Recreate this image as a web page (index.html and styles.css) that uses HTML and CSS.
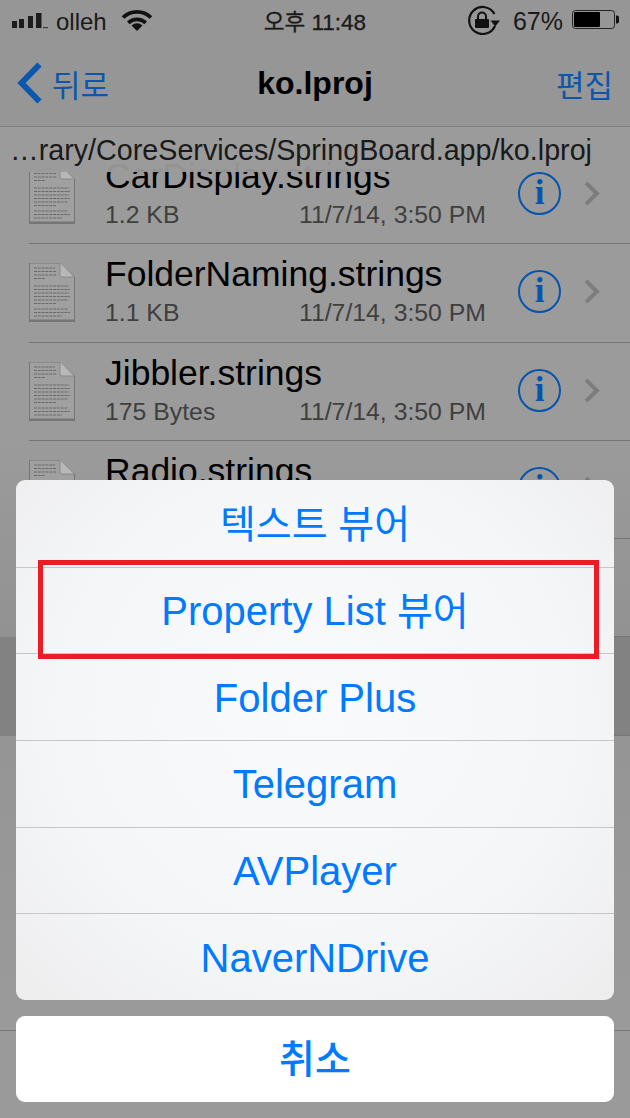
FILE: index.html
```html
<!DOCTYPE html>
<html lang="ko">
<head>
  <meta charset="UTF-8" />
  <meta name="viewport" content="width=device-width, initial-scale=1.0"/>
  <title>ko.lproj</title>
  <link rel="stylesheet" href="styles.css">
</head>
<body>
  <!-- Icono de archivo reutilizable -->
  <svg class="defs" width="0" height="0">
    <symbol id="doc" viewBox="0 0 46 60">
      <path d="M0 1H31L46 15V60H0Z" fill="#757575"/>
      <path d="M1 1.500H31L45 15V57.500H1Z" fill="#a0a0a0"/>
      <path d="M31 1L45 15H33Q31 15 31 13Z" fill="#b8b8b8"/>
      <path d="M31 1V13Q31 15 33 15H45" fill="none" stroke="#808080" stroke-width=".8"/>
      <g stroke="#6a6a6a" stroke-width="1" stroke-dasharray="3 .8">
        <path d="M5 6H26M5 9.500H28M5 13H28M5 16.500H16"/>
        <path d="M5 24H40M5 27.500H41M5 31H40M5 34.500H41M5 38H39M5 41.500H27"/>
        <path d="M5 47H39M5 50.500H41M5 54H33"/>
      </g>
    </symbol>
  </svg>

  <div class="screen">
    <!-- Lista de archivos -->
    <div class="list">
      <div class="row">
        <svg class="doc"><use href="#doc"/></svg>
        <div class="row-text">
          <div class="row-title">CarDisplay.strings</div>
          <div class="row-meta"><span>1.2 KB</span><span>11/7/14, 3:50 PM</span></div>
        </div>
        <span class="info">i</span>
        <span class="chevron"></span>
      </div>
      <div class="row">
        <svg class="doc"><use href="#doc"/></svg>
        <div class="row-text">
          <div class="row-title">FolderNaming.strings</div>
          <div class="row-meta"><span>1.1 KB</span><span>11/7/14, 3:50 PM</span></div>
        </div>
        <span class="info">i</span>
        <span class="chevron"></span>
      </div>
      <div class="row">
        <svg class="doc"><use href="#doc"/></svg>
        <div class="row-text">
          <div class="row-title">Jibbler.strings</div>
          <div class="row-meta"><span>175 Bytes</span><span>11/7/14, 3:50 PM</span></div>
        </div>
        <span class="info">i</span>
        <span class="chevron"></span>
      </div>
      <div class="row">
        <svg class="doc"><use href="#doc"/></svg>
        <div class="row-text">
          <div class="row-title">Radio.strings</div>
        </div>
        <span class="info">i</span>
        <span class="chevron"></span>
      </div>
      <div class="row"></div>
      <div class="row row-selected"></div>
    </div>
    <div class="toolbar"></div>

    <!-- Cabecera -->
    <header class="top">
      <div class="status">
        <div class="status-left">
          <svg class="signal" width="37" height="16" viewBox="0 0 37 16">
            <rect x="0" y="8" width="5" height="7" fill="#1c1c1c"/>
            <rect x="7" y="6" width="5" height="9" fill="#1c1c1c"/>
            <rect x="16" y="3" width="5" height="12" fill="#1c1c1c"/>
            <rect x="24" y="0" width="5.500" height="15" fill="#1c1c1c"/>
            <rect x="31" y="14" width="5" height="1.200" fill="#3a3a3a"/>
          </svg>
          <span class="carrier">olleh</span>
          <svg class="wifi" width="32" height="22" viewBox="0 0 32 22">
            <g fill="none" stroke="#111" stroke-width="3.800">
              <path d="M2 8.500A20 20 0 0 1 30 8.500"/>
              <path d="M7.300 13.800A12.500 12.500 0 0 1 24.700 13.800"/>
            </g>
            <path d="M16 22L10.500 16.500A7.800 7.800 0 0 1 21.500 16.500Z" fill="#111"/>
          </svg>
        </div>
        <div class="clock">오후 11:48</div>
        <div class="status-right">
          <svg class="rotation" width="36" height="30" viewBox="0 0 36 30">
            <path d="M30 21A13.500 13.500 0 1 1 29.500 9" fill="none" stroke="#111" stroke-width="2.200"/>
            <path d="M25.500 15.500H35L30.200 21.500Z" fill="#111"/>
            <rect x="10" y="14" width="14" height="9" rx="1" fill="#111"/>
            <path d="M13 14V11.500A4 4 0 0 1 21 11.500V14" fill="none" stroke="#111" stroke-width="2"/>
          </svg>
          <span class="percent">67%</span>
          <svg class="battery" width="47" height="20" viewBox="0 0 47 20">
            <rect x=".5" y=".5" width="42" height="18" rx="3" fill="none" stroke="#222"/>
            <rect x="2" y="2" width="26" height="15" rx="1" fill="#000"/>
            <path d="M44 5.500H45A2 2 0 0 1 47 7.500V11.500A2 2 0 0 1 45 13.500H44Z" fill="#111"/>
          </svg>
        </div>
      </div>
      <nav class="nav">
        <div class="nav-back">
          <svg class="back-arrow" width="26" height="42" viewBox="0 0 26 42">
            <path d="M22.500 2.500L4.500 21L22.500 39.500" fill="none" stroke="#0a57ad" stroke-width="6"/>
          </svg>
          <span>뒤로</span>
        </div>
        <h1 class="nav-title">ko.lproj</h1>
        <div class="nav-edit">편집</div>
      </nav>
      <div class="path">…rary/CoreServices/SpringBoard.app/ko.lproj</div>
    </header>

    <!-- Hoja de acciones -->
    <div class="action-sheet">
      <div class="sheet-group">
        <div class="sheet-item sheet-item-ko"><span class="ko">텍스트 뷰어</span></div>
        <div class="sheet-item sheet-item-ko"><span>Property List <span class="ko">뷰어</span></span></div>
        <div class="sheet-item">Folder Plus</div>
        <div class="sheet-item">Telegram</div>
        <div class="sheet-item">AVPlayer</div>
        <div class="sheet-item">NaverNDrive</div>
      </div>
      <div class="sheet-cancel">취소</div>
    </div>

    <div class="red-box"></div>
  </div>
</body>
</html>
```

FILE: styles.css
```css
* {
  box-sizing: border-box;
}

body {
  margin: 0;
  padding: 0;
  background-color: #9a9a9a;
  font-family: "Liberation Sans", "Noto Sans CJK KR", sans-serif;
}

.defs {
  position: absolute;
}

.screen {
  position: relative;
  width: 630px;
  height: 1118px;
  overflow: hidden;
  background: linear-gradient(#9b9b9b 0, #9b9b9b 440px, #929292 637px, #959595 740px, #9a9a9a 1000px);
}

/* Lista */
.list {
  padding-top: 146px;
}

.row {
  position: relative;
  display: flex;
  align-items: flex-start;
  height: 98.300px;
  padding: 16px 30px 0 29px;
}

.row::after {
  content: "";
  position: absolute;
  left: 29px;
  right: 0;
  bottom: 0;
  height: 1px;
  background-color: #767676;
}

.row-selected {
  background-color: #828282;
}

.doc {
  flex: none;
  width: 46px;
  height: 60px;
  margin-top: 2px;
  filter: blur(0.5px);
}

.row-text {
  flex: none;
  width: 381px;
  margin: -5px 0 0 30px;
}

.row-title {
  font-size: 35.500px;
  line-height: 38px;
  color: #000;
  white-space: nowrap;
}

.row-meta {
  display: flex;
  justify-content: space-between;
  margin-top: 6px;
  font-size: 24.800px;
  line-height: 28px;
  color: #3f3f3f;
}

.info {
  flex: none;
  width: 43px;
  height: 43px;
  margin: 10px 0 0 32px;
  border: 2px solid #0654ad;
  border-radius: 50%;
  font-family: "Liberation Serif", serif;
  font-size: 35px;
  font-weight: bold;
  line-height: 38px;
  text-align: center;
  color: #0654ad;
}

.chevron {
  flex: none;
  width: 17px;
  height: 17px;
  margin: 23px 0 0 18px;
  border-top: 4px solid #7d7d7d;
  border-right: 4px solid #7d7d7d;
  transform: rotate(45deg);
}

.toolbar {
  position: absolute;
  left: 0;
  right: 0;
  top: 1030px;
  bottom: 0;
  border-top: 1px solid #767676;
  background-color: #9a9a9a;
}

/* Cabecera */
.top {
  position: absolute;
  top: 0;
  left: 0;
  right: 0;
}

.status {
  position: relative;
  display: flex;
  justify-content: space-between;
  align-items: center;
  height: 40px;
  padding: 0 11px 0 12px;
  background-color: #969696;
  color: #1a1a1a;
}

.status-left,
.status-right {
  display: flex;
  align-items: center;
}

.carrier {
  margin: 3px 0 0 7px;
  font-size: 24px;
}

.wifi {
  margin: 0 0 0 14px;
}

.signal {
  margin-top: 2px;
}

.clock {
  position: absolute;
  left: 0;
  right: 0;
  text-align: center;
  font-size: 22.500px;
  -webkit-text-stroke: 0.3px #1a1a1a;
  pointer-events: none;
}

.percent {
  margin: 2px 9px 0 12px;
  font-size: 25px;
}

.nav {
  position: relative;
  display: flex;
  justify-content: space-between;
  align-items: center;
  height: 87px;
  padding: 0 17px 0 17px;
  background-color: #969696;
  border-bottom: 1px solid #818181;
  color: #0a57ad;
  font-size: 31px;
}

.nav-back {
  display: flex;
  align-items: center;
  gap: 9px;
}

.nav-title {
  position: absolute;
  left: 0;
  right: 0;
  margin: 0;
  text-align: center;
  font-size: 32px;
  color: #000;
}

.path {
  height: 45px;
  padding: 5px 0 0 10px;
  background-color: rgba(155, 155, 155, 0.95);
  font-size: 28.700px;
  line-height: 36px;
  color: #1a1a1a;
  white-space: nowrap;
}

/* Hoja de acciones */
.action-sheet {
  position: absolute;
  left: 16px;
  right: 16px;
  top: 480px;
  display: flex;
  flex-direction: column;
  gap: 16px;
}

.sheet-group {
  display: flex;
  flex-direction: column;
  height: 520px;
  border-radius: 9px;
  overflow: hidden;
  background: radial-gradient(ellipse at 50% 45%, #f9fafb 0, #f5f6f8 60%, #ededee 100%);
}

.sheet-item {
  flex: 0 0 86.667px;
  display: flex;
  align-items: center;
  justify-content: center;
  padding-top: 2px;
  font-size: 40px;
  color: #007aff;
  border-top: 1px solid #c6c6ca;
}

.sheet-item:first-child {
  border-top: none;
}

.sheet-item-ko {
  padding-top: 0;
  padding-bottom: 4px;
}

.ko {
  font-size: 39px;
}

.sheet-cancel {
  display: flex;
  align-items: center;
  justify-content: center;
  height: 86px;
  padding-bottom: 6px;
  border-radius: 9px;
  background-color: #fff;
  font-size: 39px;
  font-weight: 500;
  color: #007aff;
}

.red-box {
  position: absolute;
  left: 38px;
  top: 560px;
  width: 561px;
  height: 99px;
  border: 5px solid #ed1c24;
}
```
